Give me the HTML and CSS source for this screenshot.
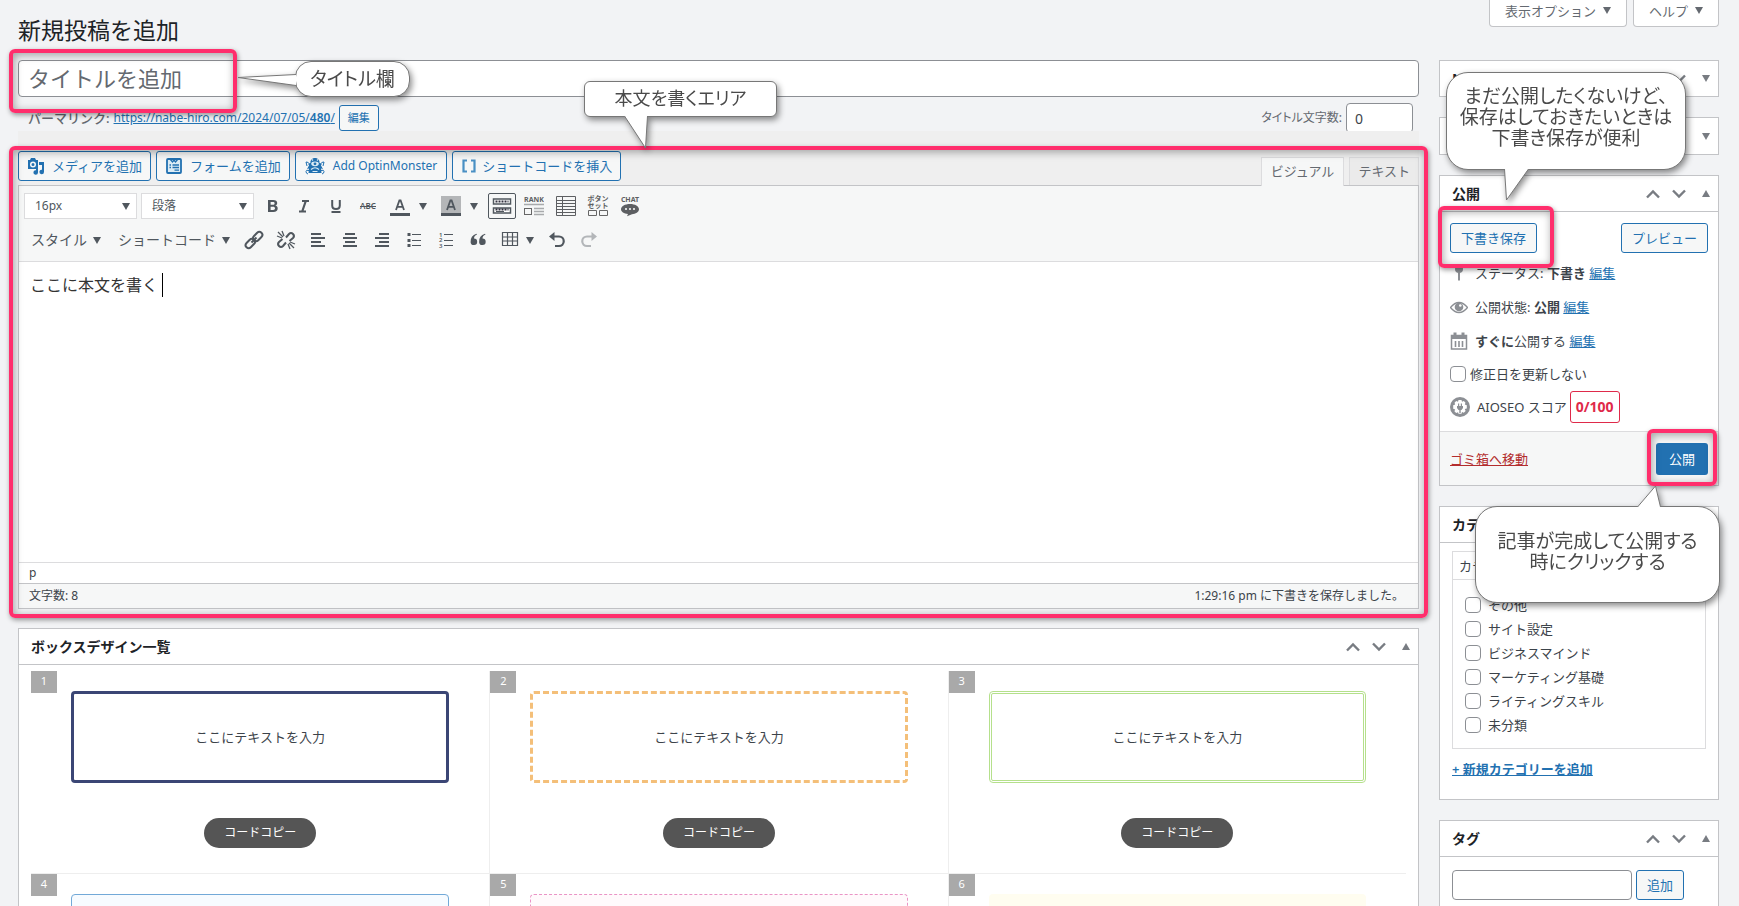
FILE: index.html
```html
<!DOCTYPE html>
<html lang="ja">
<head>
<meta charset="utf-8">
<title>新規投稿を追加</title>
<link rel="stylesheet" href="styles.css">
</head>
<body>
<svg class="defs" aria-hidden="true">
  <symbol id="i-up" viewBox="0 0 14 10"><path d="M1 8.500 7 2.500 13 8.500" fill="none" stroke="currentColor" stroke-width="2.400"/></symbol>
  <symbol id="i-down" viewBox="0 0 14 10"><path d="M1 1.500 7 7.500 13 1.500" fill="none" stroke="currentColor" stroke-width="2.400"/></symbol>
  <symbol id="i-tri" viewBox="0 0 8 7"><path d="M4 0 8 7H0z" fill="currentColor"/></symbol>
  <symbol id="i-caret" viewBox="0 0 8 7"><path d="M0 0H8L4 7z" fill="currentColor"/></symbol>
</svg>
<div class="page">
  <header class="top">
    <h1>新規投稿を追加</h1>
    <div class="screen-tabs">
      <button class="screen-tab">表示オプション <svg class="tri"><use href="#i-caret"/></svg></button>
      <button class="screen-tab">ヘルプ <svg class="tri"><use href="#i-caret"/></svg></button>
    </div>
  </header>
  <div class="columns">
    <main class="main">
      <div class="title-wrap">
        <input class="title" type="text" placeholder="タイトルを追加" aria-label="タイトルを追加">
        <div class="frame frame-title"></div>
        <div class="callout callout-title">
          <p class="bubble">タイトル欄</p>
          <svg class="tail" width="60" height="16"><path d="M59 3.500 1 6.500 59 14.500" /></svg>
        </div>
        <div class="callout callout-body">
          <p class="bubble">本文を書くエリア</p>
          <svg class="tail" width="26" height="36"><path d="M1.500 1 22.500 33 24.500 1" /></svg>
        </div>
      </div>
      <div class="permalink">
        <b>パーマリンク:</b>
        <a href="#">https://nabe-hiro.com/2024/07/05/<b>480</b>/</a>
        <button class="btn btn-small">編集</button>
        <label class="count-label" for="count">タイトル文字数:</label>
        <input id="count" class="count" type="text" value="0">
      </div>
      <section class="editor">
        <div class="media-row">
          <button class="btn media"><svg width="18" height="18" viewBox="0 0 18 18"><path fill-rule="evenodd" fill="currentColor" d="M1 3h2l1-2h4l1 2h2v9H1zM6 4.500a3 3 0 1 0 0 6 3 3 0 0 0 0-6zM6 6a1.500 1.500 0 1 1 0 3 1.500 1.500 0 0 1 0-3z"/><path fill="currentColor" d="M12 5h5v10a2.300 2.300 0 1 1-2-2.300V8h-3zM9 11h2v4.500a2.300 2.300 0 1 1-2-2.300z"/></svg>メディアを追加</button>
          <button class="btn media"><svg width="18" height="18" viewBox="0 0 18 18"><rect x="2" y="2" width="14" height="14" rx="1" fill="#dcecf5" stroke="currentColor" stroke-width="1.800"/><path d="M5 2 7.500 5 9 3l1.500 2L13 2M4.500 8H6M7.500 8H14M4.500 10.500H6M7.500 10.500H14M9.500 13.200H14" fill="none" stroke="currentColor" stroke-width="1.300"/></svg>フォームを追加</button>
          <button class="btn media latin"><svg width="20" height="18" viewBox="0 0 20 18"><path fill="currentColor" d="M5.500 6C5 3 7.500 1 10 1s5 2 4.500 5l2.500.5-1 2 2 3.500-2-.5.500 4.500h-13l.5-4.500-2 .5 2-3.500-1-2z"/><ellipse cx="10" cy="6.800" rx="3.800" ry="2.400" fill="#dcecf5"/><circle cx="10" cy="6.800" r="1.400" fill="currentColor"/><path d="M6 12.500q4-3.500 8 0M7.500 14.500h5M8 3.500l-1-1M12 3.500l1-1" fill="none" stroke="#dcecf5" stroke-width="1.200"/><path d="M4 13.500q-3-1-3 1t2 2.500M16 13.500q3-1 3 1t-2 2.500M2 9 1 5l2.500.5M18 9l1-4-2.500.5" fill="none" stroke="currentColor"/></svg>Add OptinMonster</button>
          <button class="btn media tight"><svg width="16" height="16" viewBox="0 0 16 16"><path d="M6 2.500H2.500v11H6M10 2.500h3.500v11H10" fill="none" stroke="#4a90c4" stroke-width="2.200"/></svg>ショートコードを挿入</button>
          <div class="mode-tabs">
            <button class="mode active">ビジュアル</button>
            <button class="mode">テキスト</button>
          </div>
        </div>
        <div class="pane">
          <div class="toolbar">
            <div class="tools">
              <span class="pick"><select aria-label="文字サイズ"><option>16px</option></select></span>
              <span class="pick"><select aria-label="段落"><option>段落</option></select></span>
              <button class="tool" aria-label="太字"><svg width="20" height="20"><path d="M6 4h5.200c2.600 0 4 1.100 4 3 0 1.300-.8 2.200-2 2.600 1.600.3 2.500 1.300 2.500 2.900 0 2.300-1.600 3.500-4.300 3.500H6zm2.600 2v2.800h2.200c1.200 0 1.800-.5 1.800-1.400S12 6 10.900 6zm0 4.700V14h2.500c1.300 0 1.900-.6 1.900-1.700 0-1-.7-1.600-2-1.600z" fill="currentColor" fill-rule="evenodd"/></svg></button>
              <button class="tool" aria-label="斜体"><svg width="20" height="20"><path d="M8 5h7M5 15.500h7M11.800 5 8.200 15.500" fill="none" stroke="currentColor" stroke-width="2.200"/></svg></button>
              <button class="tool" aria-label="下線"><svg width="20" height="20"><path d="M6.200 4v5.500q0 3.500 3.800 3.500t3.800-3.500V4M5.500 16h9" fill="none" stroke="currentColor" stroke-width="2"/></svg></button>
              <button class="tool" aria-label="取り消し線"><svg width="20" height="20"><text x="10" y="13" text-anchor="middle" class="t-abc">ABC</text><path d="M2 10.500h16" stroke="currentColor"/></svg></button>
              <button class="tool" aria-label="文字色"><svg width="20" height="20"><path d="M6 14 9.400 4.500h1.200L14 14M7 10.800h6" fill="none" stroke="currentColor" stroke-width="1.800"/><path d="M0 17h20v3H0z" fill="currentColor"/></svg></button>
              <button class="drop" aria-label="文字色の選択"><svg class="tri"><use href="#i-caret"/></svg></button>
              <button class="tool" aria-label="背景色"><svg width="20" height="20"><path d="M0 0h20v20H0z" fill="#b4b6b8"/><path d="M6 14 9.400 4.500h1.200L14 14M7 10.800h6" fill="none" stroke="currentColor" stroke-width="1.800"/><path d="M0 17h20v3H0z" fill="currentColor"/></svg></button>
              <button class="drop" aria-label="背景色の選択"><svg class="tri"><use href="#i-caret"/></svg></button>
              <button class="tool on" aria-label="ツールバー切り替え"><svg width="20" height="20"><path d="M1.500 3h17v5h-17zM1.500 12h17v5h-17z" fill="#fff" stroke="currentColor" stroke-width="1.500"/><path d="M3.500 5.500h13M3.500 13.500h13" stroke="#33313f" stroke-width="2" stroke-dasharray="2 1"/><path d="M4 15.500h8" stroke="currentColor"/></svg></button>
              <button class="tool" aria-label="ランキング"><svg width="20" height="22"><text x="10" y="7" text-anchor="middle" class="t-rank">RANK</text><path d="M0 9.500h20M10 13.500h10M10 16.500h10M10 19.500h10" stroke="#a8aaac" stroke-width="1.600"/><rect x=".5" y="13.500" width="7" height="6" fill="none" stroke="#666"/></svg></button>
              <button class="tool" aria-label="表"><svg width="20" height="20"><path d="M.5 .5h19v19H.5zM.5 4.500h19M.5 7.500h19M.5 10.500h19M.5 13.500h19M.5 16.500h19M6.500 .5v19" fill="none" stroke="#5d5f62"/></svg></button>
              <button class="tool" aria-label="ボタンセット"><svg width="22" height="22"><text x="11" y="6" text-anchor="middle" class="t-rank">ボタン</text><text x="11" y="13" text-anchor="middle" class="t-rank">セット</text><path d="M1.500 15.500h8v5h-8zM12.500 15.500h8v5h-8z" fill="none" stroke="#666"/></svg></button>
              <button class="tool" aria-label="チャット"><svg width="20" height="22"><text x="10" y="7" text-anchor="middle" class="t-rank">CHAT</text><path d="M10 9c5 0 9 2.200 9 5.300 0 2.800-3.500 4.700-7 5l-5 2 1-2.200c-4-.5-7-2.200-7-4.800C1 11.200 5 9 10 9z" fill="#5d5f62"/><circle cx="6" cy="14" r="1" fill="#fff"/><circle cx="10" cy="14" r="1" fill="#fff"/><circle cx="14" cy="14" r="1" fill="#fff"/></svg></button>
            </div>
            <div class="tools">
              <button class="menu">スタイル <svg class="tri"><use href="#i-caret"/></svg></button>
              <button class="menu">ショートコード <svg class="tri"><use href="#i-caret"/></svg></button>
              <button class="tool" aria-label="リンク"><svg width="20" height="20"><g fill="none" stroke="currentColor" stroke-width="2"><rect x="8.500" y="3.500" width="10.500" height="6" rx="3" transform="rotate(-45 13.700 6.500)"/><rect x="1" y="10.500" width="10.500" height="6" rx="3" transform="rotate(-45 6.300 13.500)"/><path d="m7.500 12.500 5-5"/></g></svg></button>
              <button class="tool" aria-label="リンク解除"><svg width="20" height="20"><g fill="none" stroke="currentColor" stroke-width="2"><path d="M10 7.500 13 4q2-2 4 0t0 4l-3.500 3M10 12.500 7 16q-2 2-4 0t0-4l3.500-3"/><path d="M2 2l5 5M6 1l2 5M1 6l5 2M18 18l-5-5M14 19l-2-5M19 14l-5-2" stroke-width="1.300"/></g></svg></button>
              <button class="tool" aria-label="左寄せ"><svg width="20" height="20"><path d="M3 4h10M3 8h14M3 12h10M3 16h14" stroke="currentColor" stroke-width="2"/></svg></button>
              <button class="tool" aria-label="中央揃え"><svg width="20" height="20"><path d="M5 4h10M3 8h14M5 12h10M3 16h14" stroke="currentColor" stroke-width="2"/></svg></button>
              <button class="tool" aria-label="右寄せ"><svg width="20" height="20"><path d="M7 4h10M3 8h14M7 12h10M3 16h14" stroke="currentColor" stroke-width="2"/></svg></button>
              <button class="tool" aria-label="箇条書き"><svg width="20" height="20"><path d="M8 4.500h9M8 10.500h9M8 15.500h9" stroke="currentColor" stroke-width="1.200"/><path d="M3.500 3h3v3h-3zM3.500 9h3v3h-3zM3.500 14h3v3h-3z" fill="currentColor"/></svg></button>
              <button class="tool" aria-label="番号付きリスト"><svg width="20" height="20"><path d="M8 4.500h9M8 10.500h9M8 15.500h9" stroke="currentColor" stroke-width="1.200"/><text x="3" y="7" class="t-num">1</text><text x="3" y="12" class="t-num">2</text><text x="3" y="18" class="t-num">3</text></svg></button>
              <button class="tool" aria-label="引用"><svg width="20" height="20"><path d="M9 4.500q-3 1-3 4a3.300 3.300 0 1 1-3.400 3.700Q2.300 5.500 8.500 3.800zM17.500 4.500q-3 1-3 4a3.300 3.300 0 1 1-3.400 3.700q-.3-6.700 5.900-8.400z" fill="currentColor"/></svg></button>
              <button class="tool" aria-label="テーブル"><svg width="18" height="20"><path d="M1.500 2.500h15v13h-15zM1.500 7h15M1.500 11h15M6.500 2.500v13M11.500 2.500v13" fill="none" stroke="currentColor" stroke-width="1.200"/></svg></button>
              <button class="drop narrow" aria-label="テーブルの選択"><svg class="tri"><use href="#i-caret"/></svg></button>
              <button class="tool" aria-label="取り消し"><svg width="20" height="20"><path d="M4 6.500h8a4.600 4.600 0 0 1 0 9.500H8" fill="none" stroke="currentColor" stroke-width="2.200"/><path d="M7.500 2v9L2 6.500z" fill="currentColor"/></svg></button>
              <button class="tool faded" aria-label="やり直し"><svg width="20" height="20"><path d="M16 6.500H8A4.600 4.600 0 0 0 8 16h4" fill="none" stroke="currentColor" stroke-width="2.200"/><path d="M12.500 2v9L18 6.500z" fill="currentColor"/></svg></button>
            </div>
          </div>
          <div class="content" contenteditable="true" role="textbox" aria-label="本文"><p>ここに本文を書く<span class="cursor"></span></p></div>
          <div class="path">p</div>
          <div class="status"><span>文字数: 8</span><span>1:29:16 pm に下書きを保存しました。</span></div>
        </div>
        <div class="frame frame-editor"></div>
      </section>
      <section class="panel boxes">
        <div class="panel-head"><h2>ボックスデザイン一覧</h2><div class="handles"><button aria-label="上に移動"><svg class="chev"><use href="#i-up"/></svg></button><button aria-label="下に移動"><svg class="chev"><use href="#i-down"/></svg></button><button aria-label="切り替え"><svg class="tri"><use href="#i-tri"/></svg></button></div></div>
        <div class="grid">
          <article class="cell"><span class="num">1</span><div class="sample navy">ここにテキストを入力</div><button class="copy">コードコピー</button></article>
          <article class="cell"><span class="num">2</span><div class="sample orange">ここにテキストを入力</div><button class="copy">コードコピー</button></article>
          <article class="cell"><span class="num">3</span><div class="sample green">ここにテキストを入力</div><button class="copy">コードコピー</button></article>
          <article class="cell"><span class="num">4</span><div class="sample blue"></div></article>
          <article class="cell"><span class="num">5</span><div class="sample pink"></div></article>
          <article class="cell"><span class="num">6</span><div class="sample cream"></div></article>
        </div>
      </section>
    </main>
    <aside class="side">
      <section class="panel closed"><div class="panel-head"><h2>N</h2><div class="handles"><button aria-label="上に移動"><svg class="chev"><use href="#i-up"/></svg></button><button aria-label="下に移動"><svg class="chev"><use href="#i-down"/></svg></button><button aria-label="切り替え"><svg class="tri"><use href="#i-caret"/></svg></button></div></div></section>
      <section class="panel closed"><div class="panel-head"><h2></h2><div class="handles"><button aria-label="切り替え"><svg class="tri"><use href="#i-caret"/></svg></button></div></div></section>
      <section class="panel publish">
        <div class="callout callout-save">
          <p class="bubble">まだ公開したくないけど、<br>保存はしておきたいときは<br>下書き保存が便利</p>
          <svg class="tail" width="28" height="34"><path d="M1.500 1 3.500 32 25.500 1" /></svg>
        </div>
        <div class="panel-head"><h2>公開</h2><div class="handles"><button aria-label="上に移動"><svg class="chev"><use href="#i-up"/></svg></button><button aria-label="下に移動"><svg class="chev"><use href="#i-down"/></svg></button><button aria-label="切り替え"><svg class="tri"><use href="#i-tri"/></svg></button></div></div>
        <div class="save-row">
          <span class="mark"><button class="btn">下書き保存</button><span class="frame frame-save"></span></span>
          <button class="btn">プレビュー</button>
        </div>
        <div class="info">
          <p><svg width="18" height="20"><circle cx="9" cy="6" r="4" fill="currentColor"/><path d="M8 9h2v8l-1 1-1-1z" fill="currentColor"/></svg><span>ステータス: <b>下書き</b> <a href="#">編集</a></span></p>
          <p><svg width="18" height="20"><path d="M.5 10.500Q4.500 5.500 9 5.500t8.500 5Q13.500 15.500 9 15.500t-8.500-5z" fill="#fff" stroke="currentColor" stroke-width="1.300"/><circle cx="9" cy="10" r="4.300" fill="currentColor"/><circle cx="10.300" cy="8.500" r="1.300" fill="#fff"/></svg><span>公開状態: <b>公開</b> <a href="#">編集</a></span></p>
          <p><svg width="18" height="20"><path d="M1.500 4.500h15V18h-15z" fill="#fff" stroke="currentColor" stroke-width="1.500"/><path d="M1 4h16v4H1z" fill="currentColor"/><path d="M5 1.500v4M13 1.500v4" stroke="currentColor" stroke-width="3"/><path d="M5.500 10v6M9 10v6M12.500 10v6" stroke="currentColor" stroke-width="1.600"/></svg><span><b>すぐに</b>公開する <a href="#">編集</a></span></p>
          <label class="check"><input type="checkbox">修正日を更新しない</label>
          <p class="score"><svg width="20" height="20"><circle cx="10" cy="10" r="10" fill="currentColor"/><path d="M8.500 3h3l.5 1.700 1.800-.7 1.700 1.700-.7 1.700 2 .8v3.200l-2 .7.800 1.900-1.800 1.700-1.800-.8-.5 1.800h-3L8 15.200l-1.800.8-1.800-1.700.8-1.900-2-.7V8.300l2-.8-.7-1.800L6.200 4l1.800.7z" fill="#fff"/><path d="M7 9h6v2l-1.500 2h-3L7 11zM8 6.500h1.200V9H8zM10.800 6.500H12V9h-1.200zM9.300 12h1.400v4H9.300z" fill="currentColor"/></svg><span>AIOSEO スコア</span><strong>0/100</strong></p>
        </div>
        <div class="actions">
          <a class="trash" href="#">ゴミ箱へ移動</a>
          <span class="mark"><button class="primary">公開</button><span class="frame frame-publish"></span></span>
        </div>
      </section>
      <section class="panel cats">
        <div class="panel-head"><h2>カテゴリー</h2></div>
        <div class="cat-body">
          <button class="cat-tab">カテゴリー一覧</button>
          <div class="cat-list">
            <label class="check"><input type="checkbox">その他</label>
            <label class="check"><input type="checkbox">サイト設定</label>
            <label class="check"><input type="checkbox">ビジネスマインド</label>
            <label class="check"><input type="checkbox">マーケティング基礎</label>
            <label class="check"><input type="checkbox">ライティングスキル</label>
            <label class="check"><input type="checkbox">未分類</label>
          </div>
          <a class="add" href="#">+ 新規カテゴリーを追加</a>
        </div>
        <div class="callout callout-publish">
          <p class="bubble">記事が完成して公開する<br>時にクリックする</p>
          <svg class="tail" width="26" height="24"><path d="M1.500 23 19.500 2 24.500 23" /></svg>
        </div>
      </section>
      <section class="panel tags">
        <div class="panel-head"><h2>タグ</h2><div class="handles"><button aria-label="上に移動"><svg class="chev"><use href="#i-up"/></svg></button><button aria-label="下に移動"><svg class="chev"><use href="#i-down"/></svg></button><button aria-label="切り替え"><svg class="tri"><use href="#i-tri"/></svg></button></div></div>
        <div class="tag-row"><input type="text" aria-label="タグ"><button class="btn">追加</button></div>
      </section>
    </aside>
  </div>
</div>
</body>
</html>
```
FILE: styles.css
```css
* { box-sizing: border-box; }
body {
  margin: 0;
  background: #f2f3f5;
  color: #3c434a;
  font: 13px/20px "Noto Sans", "Noto Sans CJK JP", sans-serif;
}
button, input, select { font: inherit; color: inherit; margin: 0; }
button { background: none; border: 0; padding: 0; white-space: nowrap; }
h1, h2, p { margin: 0; font-weight: 400; }
a { color: #2271b1; }
svg { flex: none; display: block; }
.defs { position: absolute; width: 0; height: 0; }
.tri { width: 8px; height: 7px; }
.chev { width: 14px; height: 10px; }

.page { height: 100vh; overflow: auto; scrollbar-width: none; padding: 0 20px 0 18px; }
.top { display: flex; justify-content: space-between; align-items: flex-start; height: 60px; }
h1 { font-size: 23px; line-height: 30px; padding-top: 15px; color: #1d2327; }
.screen-tabs { display: flex; gap: 6px; }
.screen-tab {
  display: flex; align-items: center; gap: 7px;
  height: 27px; padding: 0 15px 5px;
  background: #fff; color: #646970;
  border: 1px solid #c3c4c7; border-top: 0; border-radius: 0 0 4px 4px;
}
.columns { display: flex; align-items: flex-start; gap: 20px; }
.main { flex: 1; min-width: 0; }
.side { width: 280px; flex: none; display: flex; flex-direction: column; gap: 20px; }

.btn {
  height: 30px; padding: 0 10px;
  color: #2271b1; background: #f6f7f7;
  border: 1px solid #2271b1; border-radius: 3px;
}
.btn-small { height: 26px; padding: 0 8px; font-size: 11px; margin-left: 4px; }

.title-wrap { position: relative; }
.title {
  display: block; width: 100%; height: 37px; padding: 0 9px 2px;
  font-size: 22px; background: #fff; border: 1px solid #8c8f94; border-radius: 4px;
}
.title::placeholder { color: #646970; opacity: 1; }
.permalink { display: flex; align-items: center; height: 34px; padding: 8px 6px 0 10px; overflow: hidden; }
.permalink > b { color: #646970; font-weight: 500; margin-right: 4px; }
.permalink a { font-size: 12px; }
.permalink a b { font-weight: 600; }
.count-label { margin-left: auto; margin-right: 4px; color: #646970; font-size: 12px; font-feature-settings: "palt"; }
.count {
  width: 67px; height: 30px; padding: 0 8px; align-self: flex-start; margin-top: -2px; font-size: 14px;
  background: #fff; border: 1px solid #8c8f94; border-radius: 4px;
}

.editor { position: relative; }
.media-row { display: flex; align-items: flex-start; gap: 5px; height: 54px; padding-top: 20px; background: #efefef; }
.media { display: flex; align-items: center; gap: 7px; padding: 0 8px; }
.latin { font-size: 12px; padding: 0 9px; gap: 8px; }
.tight { gap: 5px; }
.mode-tabs { display: flex; gap: 5px; margin-left: auto; align-self: flex-end; }
.mode {
  height: 28px; padding: 0 8px 2px; color: #646970;
  background: #ebebeb; border: 1px solid #dcdcde; border-bottom: 0;
}
.mode.active { position: relative; height: 29px; margin-bottom: -1px; background: #f6f7f7; z-index: 1; padding: 0 9px 3px; }
.pane { border: 1px solid #c3c4c7; }
.toolbar { background: #f6f7f7; border-bottom: 1px solid #dcdcde; padding: 4px 5px; height: 76px; }
.tools { display: flex; align-items: center; height: 32px; color: #50575e; }
.tools + .tools { margin-top: 2px; }
.pick { position: relative; width: 113px; height: 26px; margin-right: 4px; }
.pick:nth-child(2) { margin-right: 2px; }
.pick select {
  appearance: none; width: 100%; height: 26px; padding: 0 10px;
  font-size: 12px; background: #fff; border: 1px solid #dcdcde; border-radius: 0;
}
.pick::after {
  content: ""; position: absolute; right: 7px; top: 10px;
  border: 4px solid transparent; border-top: 7px solid #50575e; border-bottom: 0;
}
.tool { width: 32px; height: 26px; display: flex; justify-content: center; align-items: center; flex: none; }
.tool.on { width: 28px; margin: 0 2px; background: #f6f7f7; border: 1px solid #50575e; border-radius: 2px; }
.drop { width: 15px; height: 26px; margin-right: 4px; padding-left: 3px; }
.drop.narrow { padding-left: 0; margin-right: 0; }
.menu { display: flex; align-items: center; gap: 6px; font-size: 14px; margin-left: 7px; color: #50575e; }
.menu + .menu { margin: 0 8px 0 17px; }
.faded { opacity: .4; }
.t-abc { font-size: 8px; font-weight: 600; fill: #50575e; }
.t-rank { font-size: 7px; font-weight: 700; fill: #5d5f62; }
.t-num { font-size: 6px; font-weight: 600; fill: #50575e; }
.content { height: 300px; padding: 11px 11px; background: #fff; font-size: 16px; line-height: 24px; color: #333; outline: 0; }
.content p { display: flex; align-items: center; }
.cursor { width: 1px; height: 24px; background: #000; margin-left: 4px; }
.path { height: 21px; padding: 0 10px; background: #fff; border-top: 1px solid #dcdcde; font-size: 12px; line-height: 19px; }
.status {
  display: flex; justify-content: space-between; height: 25px; padding: 0 14px 0 10px;
  background: #f6f7f7; border-top: 1px solid #c3c4c7; font-size: 12px; line-height: 24px;
}

.panel { position: relative; background: #fff; border: 1px solid #c3c4c7; }
.panel-head { display: flex; align-items: center; justify-content: space-between; height: 36px; padding: 0 8px 0 12px; border-bottom: 1px solid #c3c4c7; }
.closed .panel-head { border: 0; }
.closed:first-child .panel-head { height: 35px; }
h2 { font-size: 14px; font-weight: 600; color: #1d2327; }
.handles { display: flex; align-items: center; gap: 12px; color: #787c82; }
.handles button:last-child { margin-left: 4px; }

.boxes { margin-top: 19px; }
.grid { display: grid; grid-template-columns: repeat(3, 1fr); padding: 6px 12px 12px; }
.cell { position: relative; height: 203px; padding: 20px 40px; text-align: center; border-bottom: 1px solid #eee; }
.cell + .cell { border-left: 1px solid #eee; }
.cell:nth-child(4) { border-left: 0; }
.num { position: absolute; left: 0; top: 0; width: 26px; height: 22px; background: #a9a9a9; color: #fff; font-size: 11px; line-height: 20px; }
.sample { display: flex; align-items: center; justify-content: center; height: 92px; margin-bottom: 35px; padding-bottom: 1px; border-radius: 4px; }
.navy { border: 3px solid #3b4675; }
.orange { border: 3px dashed #f4bf79; }
.green { border: 3px double #b5e08c; }
.blue { border: 1px solid #72a9d8; background: #f7fbff; }
.pink { border: 1px dashed #ea94c6; background: #fffafc; }
.cream { background: #fffdf0; }
.copy { height: 30px; padding: 0 20px; border-radius: 15px; background: #555; color: #fff; font-size: 12px; }

.save-row { display: flex; justify-content: space-between; padding: 11px 10px 0; }
.mark { position: relative; display: flex; }
.info { padding: 3px 10px 7px; }
.info p, .check { display: flex; align-items: center; }
.info p { height: 34px; gap: 7px; }
.info p svg { color: #8c8f94; }
.info b { font-weight: 600; }
.check { gap: 4px; height: 32px; }
.check input {
  appearance: none; width: 16px; height: 16px; flex: none;
  background: #fff; border: 1px solid #8c8f94; border-radius: 4px;
}
.score strong { height: 32px; padding: 0 5px; margin-left: -4px; border: 1px solid #df2a4a; border-radius: 3px; color: #df2a4a; font-size: 14px; line-height: 30px; }
.actions { display: flex; align-items: center; justify-content: space-between; height: 54px; padding: 0 10px; background: #f6f7f7; border-top: 1px solid #dcdcde; }
.trash { color: #b32d2e; }
.primary { height: 32px; padding: 0 13px; background: #2271b1; color: #fff; border-radius: 3px; }

.cat-body { padding: 8px 12px 20px; }
.cat-tab { display: block; height: 28px; padding: 0 6px; border: 1px solid #dcdcde; border-bottom: 0; }
.cat-list { border: 1px solid #dcdcde; padding: 13px 12px 11px; margin-bottom: 10px; }
.cat-list .check { height: 24px; gap: 7px; }
.add { font-weight: 600; }
.tag-row { display: flex; gap: 4px; padding: 13px 12px; }
.tag-row input { width: 180px; height: 30px; background: #fff; border: 1px solid #8c8f94; border-radius: 4px; }

.frame {
  position: absolute; z-index: 3; pointer-events: none;
  border: 4px solid #ff2e6c; border-radius: 6px;
  box-shadow: 1px 2px 5px rgba(0, 0, 0, .4), inset 1px 2px 8px rgba(0, 0, 0, .35);
}
.frame-title { left: -9px; top: -11px; width: 228px; height: 64px; }
.frame-editor { left: -9px; right: -9px; top: 15px; bottom: -9px; }
.frame-save { left: -12px; top: -17px; right: -17px; bottom: -15px; }
.frame-publish { left: -9px; top: -14px; right: -9px; bottom: -11px; }

.callout { position: absolute; z-index: 4; filter: drop-shadow(2px 3px 3px rgba(0, 0, 0, .45)); }
.bubble {
  display: flow-root; background: #fff; border: 1px solid #777; color: #4a4a4a; text-align: center; white-space: nowrap;
  font: 19px/21px "Noto Sans CJK JP", sans-serif; font-feature-settings: "palt";
}
.tail { position: absolute; overflow: visible; }
.tail path { fill: #fff; stroke: #777; }
.callout-title { left: 277px; top: 1px; }
.callout-title .bubble { width: 115px; height: 36px; padding-top: 5px; border-radius: 16px; }
.callout-title .tail { left: -58px; top: 10px; }
.callout-body { left: 566px; top: 21px; }
.callout-body .bubble { width: 193px; height: 36px; padding-top: 5px; border-radius: 6px; font-size: 18px; }
.callout-body .tail { left: 39px; top: 34px; }
.callout-save { right: 32px; top: -104px; }
.callout-save .bubble { width: 240px; height: 98px; padding-top: 11px; border-radius: 22px; }
.callout-save .tail { left: 57px; top: 96px; }
.callout-publish { right: -2px; top: -1px; }
.callout-publish .bubble { width: 245px; height: 97px; padding-top: 22px; border-radius: 22px; }
.callout-publish .tail { left: 161px; top: -22px; }
```
